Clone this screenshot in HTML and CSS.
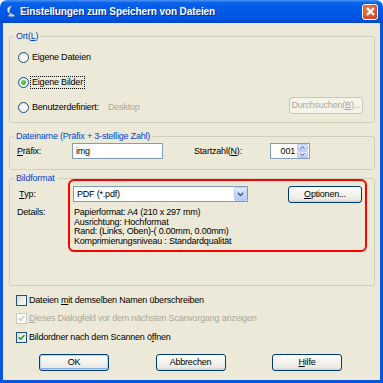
FILE: index.html
```html
<!DOCTYPE html>
<html lang="de">
<head>
  <meta charset="UTF-8" />
  <title>Einstellungen zum Speichern von Dateien</title>
  <link rel="stylesheet" href="styles.css">
</head>
<body>
  <div class="window">
    <div class="titlebar">
      <svg class="app-icon" width="12" height="13" viewBox="0 0 12 13">
        <path d="M7 1 C3 1 1 4 3 7 L6 10 C4 7 4 4 7 1 Z" fill="#e8ecf4" stroke="#6b7fa8" stroke-width="0.6"/>
        <path d="M5 8 C7 9 9 9 10 11 C8 12 5 12 3 11 Z" fill="#c9d0de" stroke="#6b7fa8" stroke-width="0.6"/>
      </svg>
      <span class="title">Einstellungen zum Speichern von Dateien</span>
      <span class="close-btn">
        <svg width="9" height="9" viewBox="0 0 9 9"><path d="M1 1L8 8M8 1L1 8" stroke="#fff" stroke-width="1.9"/></svg>
      </span>
    </div>

    <div class="client">
      <fieldset class="group ort">
        <legend>Ort(<u>L</u>)</legend>
        <div class="radio-row"><span class="radio"></span><span class="opt">Eigene Dateien</span></div>
        <div class="radio-row"><span class="radio checked"></span><span class="opt focus">Eigene Bilder</span></div>
        <div class="radio-row">
          <span class="radio"></span><span class="opt custom">Benutzerdefiniert:</span>
          <span class="path">Desktop</span>
          <button class="btn browse" disabled>Durchsuchen(<u>B</u>)...</button>
        </div>
      </fieldset>

      <fieldset class="group name">
        <legend>Dateiname (Präfix + 3-stellige Zahl)</legend>
        <div class="name-row">
          <span class="prefix-lbl"><u>P</u>räfix:</span>
          <span class="textbox prefix">img</span>
          <span class="start-lbl">Startzahl(<u>N</u>):</span>
          <span class="textbox spin">
            <span class="spin-value">001</span>
            <span class="spin-btns">
              <span class="spin-btn"><svg width="5" height="3" viewBox="0 0 5 3"><path d="M0.5 2.5L2.5 0.5L4.5 2.5" fill="none" stroke="#4d6185" stroke-width="1"/></svg></span>
              <span class="spin-btn"><svg width="5" height="3" viewBox="0 0 5 3"><path d="M0.5 0.5L2.5 2.5L4.5 0.5" fill="none" stroke="#4d6185" stroke-width="1"/></svg></span>
            </span>
          </span>
        </div>
      </fieldset>

      <fieldset class="group format">
        <legend>Bildformat</legend>
        <div class="format-body">
          <div class="format-labels">
            <div class="typ-lbl"><u>T</u>yp:</div>
            <div class="details-lbl">Details:</div>
          </div>
          <div class="highlight">
            <div class="type-row">
              <span class="textbox select">
                <span>PDF (*.pdf)</span>
                <span class="drop-btn"><svg width="7" height="5" viewBox="0 0 7 5"><path d="M0.8 0.8L3.5 3.5L6.2 0.8" fill="none" stroke="#4d6185" stroke-width="1.6"/></svg></span>
              </span>
              <button class="btn options"><u>O</u>ptionen...</button>
            </div>
            <div class="details">
              <div>Papierformat: A4 (210 x 297 mm)</div>
              <div>Ausrichtung: Hochformat</div>
              <div>Rand: (Links, Oben)-( 0.00mm, 0.00mm)</div>
              <div>Komprimierungsniveau : Standardqualität</div>
            </div>
          </div>
        </div>
      </fieldset>

      <div class="checks">
        <div class="check-row"><span class="check"></span><span>Dateien <u>m</u>it demselben Namen überschreiben</span></div>
        <div class="check-row disabled">
          <span class="check checked"><svg width="7" height="7" viewBox="0 0 7 7"><path d="M0.5 3.2L2.5 5.2L6.5 1.2" fill="none" stroke="#cac8bb" stroke-width="1.6"/></svg></span>
          <span><u>D</u>ieses Dialogfeld vor dem nächsten Scanvorgang anzeigen</span>
        </div>
        <div class="check-row">
          <span class="check checked"><svg width="7" height="7" viewBox="0 0 7 7"><path d="M0.5 3.2L2.5 5.2L6.5 1.2" fill="none" stroke="#21a121" stroke-width="1.6"/></svg></span>
          <span>Bildordner nach dem Scannen ö<u>f</u>fnen</span>
        </div>
      </div>

      <div class="buttons">
        <button class="btn default">OK</button>
        <button class="btn">Abbrechen</button>
        <button class="btn"><u>H</u>ilfe</button>
      </div>
    </div>
  </div>
</body>
</html>
```

FILE: styles.css
```css
* {
  box-sizing: border-box;
}

html, body {
  margin: 0;
  padding: 0;
  background: #fff;
}

body {
  font-family: "Liberation Sans", Arial, sans-serif;
  font-size: 9px;
  line-height: 11px;
  letter-spacing: -0.2px;
  color: #000;
}

u {
  text-decoration: underline;
}

.window {
  width: 383px;
  height: 383px;
  display: flex;
  flex-direction: column;
  border-radius: 7px 7px 0 0;
  overflow: hidden;
}

/* title bar */
.titlebar {
  height: 23px;
  flex: none;
  display: flex;
  align-items: center;
  padding: 0 5px 0 5px;
  background: linear-gradient(to bottom, #4a94f8 0%, #0a62ea 12%, #0058e6 45%, #0054e3 80%, #0046cc 100%);
  color: #fff;
}

.app-icon {
  margin-right: 3px;
  flex: none;
}

.title {
  flex: 1;
  font-weight: bold;
  font-size: 10px;
  letter-spacing: -0.1px;
  text-shadow: 1px 1px 0 #0b2d8f;
}

.close-btn {
  width: 16px;
  height: 16px;
  border: 1px solid #fff;
  border-radius: 3px;
  background: radial-gradient(circle at 40% 35%, #ef8a66 0%, #d9542c 60%, #c03a18 100%);
  display: flex;
  align-items: center;
  justify-content: center;
}

/* client area */
.client {
  flex: 1;
  background: #ece9d8;
  border: 3px solid #0a55e0;
  border-top: 0;
  padding: 8px 5px 0 6px;
  display: flex;
  flex-direction: column;
}

.group {
  margin: 0;
  min-width: 0;
  border: 1px solid #d0d0bf;
  border-radius: 3px;
  padding: 3px 11px 2px 7px;
}

.group legend {
  padding: 0 2px;
  margin-left: -3px;
  color: #0046d5;
  line-height: 11px;
}

/* Ort */
.radio-row {
  height: 25px;
  display: flex;
  align-items: center;
}

.radio {
  width: 11px;
  height: 11px;
  margin-left: 1px;
  border: 1px solid #1c5180;
  border-radius: 50%;
  background: radial-gradient(circle at 60% 60%, #fff 30%, #dcdad0 100%);
  display: flex;
  align-items: center;
  justify-content: center;
  flex: none;
}

.radio.checked::after {
  content: "";
  width: 5px;
  height: 5px;
  border-radius: 50%;
  background: radial-gradient(circle at 35% 35%, #6fd66f, #21a121);
}

.opt {
  margin-left: 1px;
  padding: 0 1px;
  border: 1px solid transparent;
}

.opt.focus {
  border: 1px dotted #000;
}

.opt.custom {
  width: 78px;
}

.path {
  color: #aca899;
}

.btn {
  font-family: inherit;
  font-size: 9px;
  line-height: 11px;
  letter-spacing: -0.2px;
  color: #000;
  height: 17px;
  padding: 0;
  border: 1px solid #003c74;
  border-radius: 3px;
  background: linear-gradient(to bottom, #fff 0%, #f5f4ee 40%, #ecebe5 80%, #d6d0c5 100%);
}

.btn.browse {
  width: 74px;
  margin-left: auto;
  align-self: flex-start;
  margin-top: 2px;
  color: #aca899;
  border-color: #c9c7ba;
  background: #f5f4ea;
}

/* Dateiname */
.group.name {
  margin-top: 8px;
  padding-top: 1px;
  padding-bottom: 10px;
}

.name-row {
  height: 16px;
  display: flex;
  align-items: center;
}

.prefix-lbl {
  width: 55px;
}

.textbox {
  height: 16px;
  border: 1px solid #7f9db9;
  background: #fff;
  display: flex;
  align-items: center;
}

.prefix {
  width: 91px;
  padding-left: 3px;
}

.start-lbl {
  margin-left: 31px;
  width: 76px;
}

.spin {
  width: 40px;
  padding-left: 3px;
}

.spin-value {
  flex: 1;
  text-align: right;
  padding-right: 2px;
}

.spin-btns {
  width: 11px;
  height: 14px;
  margin-right: 1px;
  display: flex;
  flex-direction: column;
}

.spin-btn {
  height: 7px;
  border: 1px solid #b9cdf8;
  border-radius: 1px;
  background: linear-gradient(to bottom, #dfe8fd, #b8cbf5);
  display: flex;
  align-items: center;
  justify-content: center;
}

/* Bildformat */
.group.format {
  margin-top: 3px;
  padding-top: 2px;
  padding-bottom: 38px;
}

.format-body {
  display: flex;
}

.format-labels {
  width: 56px;
  flex: none;
}

.typ-lbl {
  height: 17px;
  padding-left: 2px;
  display: flex;
  align-items: center;
}

.details-lbl {
  margin-top: 5px;
  line-height: 9.7px;
}

.highlight {
  position: relative;
  width: 289px;
}

.highlight::after {
  content: "";
  position: absolute;
  top: -7px;
  left: -5px;
  right: -5px;
  bottom: -5px;
  border: 2px solid #ff0000;
  border-radius: 6px;
}

.type-row {
  height: 17px;
  display: flex;
  align-items: flex-start;
}

.select {
  width: 175px;
  padding-left: 3px;
  justify-content: space-between;
}

.drop-btn {
  width: 13px;
  height: 14px;
  border: 1px solid #b9cdf8;
  border-radius: 2px;
  background: linear-gradient(to bottom, #e3ebfe, #b4c8f6);
  display: flex;
  align-items: center;
  justify-content: center;
}

.btn.options {
  width: 74px;
  margin-left: auto;
}

.details {
  margin-top: 5px;
  line-height: 9.7px;
  padding-left: 1px;
}

/* checkboxes */
.checks {
  margin-top: 5px;
  padding-left: 7px;
}

.check-row {
  height: 18.5px;
  display: flex;
  align-items: center;
}

.check {
  width: 11px;
  height: 11px;
  margin-right: 2px;
  border: 1px solid #1c5180;
  background: linear-gradient(135deg, #dcdad0, #fff);
  display: flex;
  align-items: center;
  justify-content: center;
  flex: none;
}

.check-row.disabled {
  color: #aca899;
}

.check-row.disabled .check {
  border-color: #cac8bb;
  background: #fff;
}

/* dialog buttons */
.buttons {
  margin-top: 8px;
  padding: 0 33px 0 30px;
  display: flex;
  justify-content: space-between;
}

.buttons .btn {
  width: 70px;
}

.btn.default {
  box-shadow: inset 0 0 0 1px #bcd4f6, inset 0 -1px 0 1px #89ade4;
}
```
